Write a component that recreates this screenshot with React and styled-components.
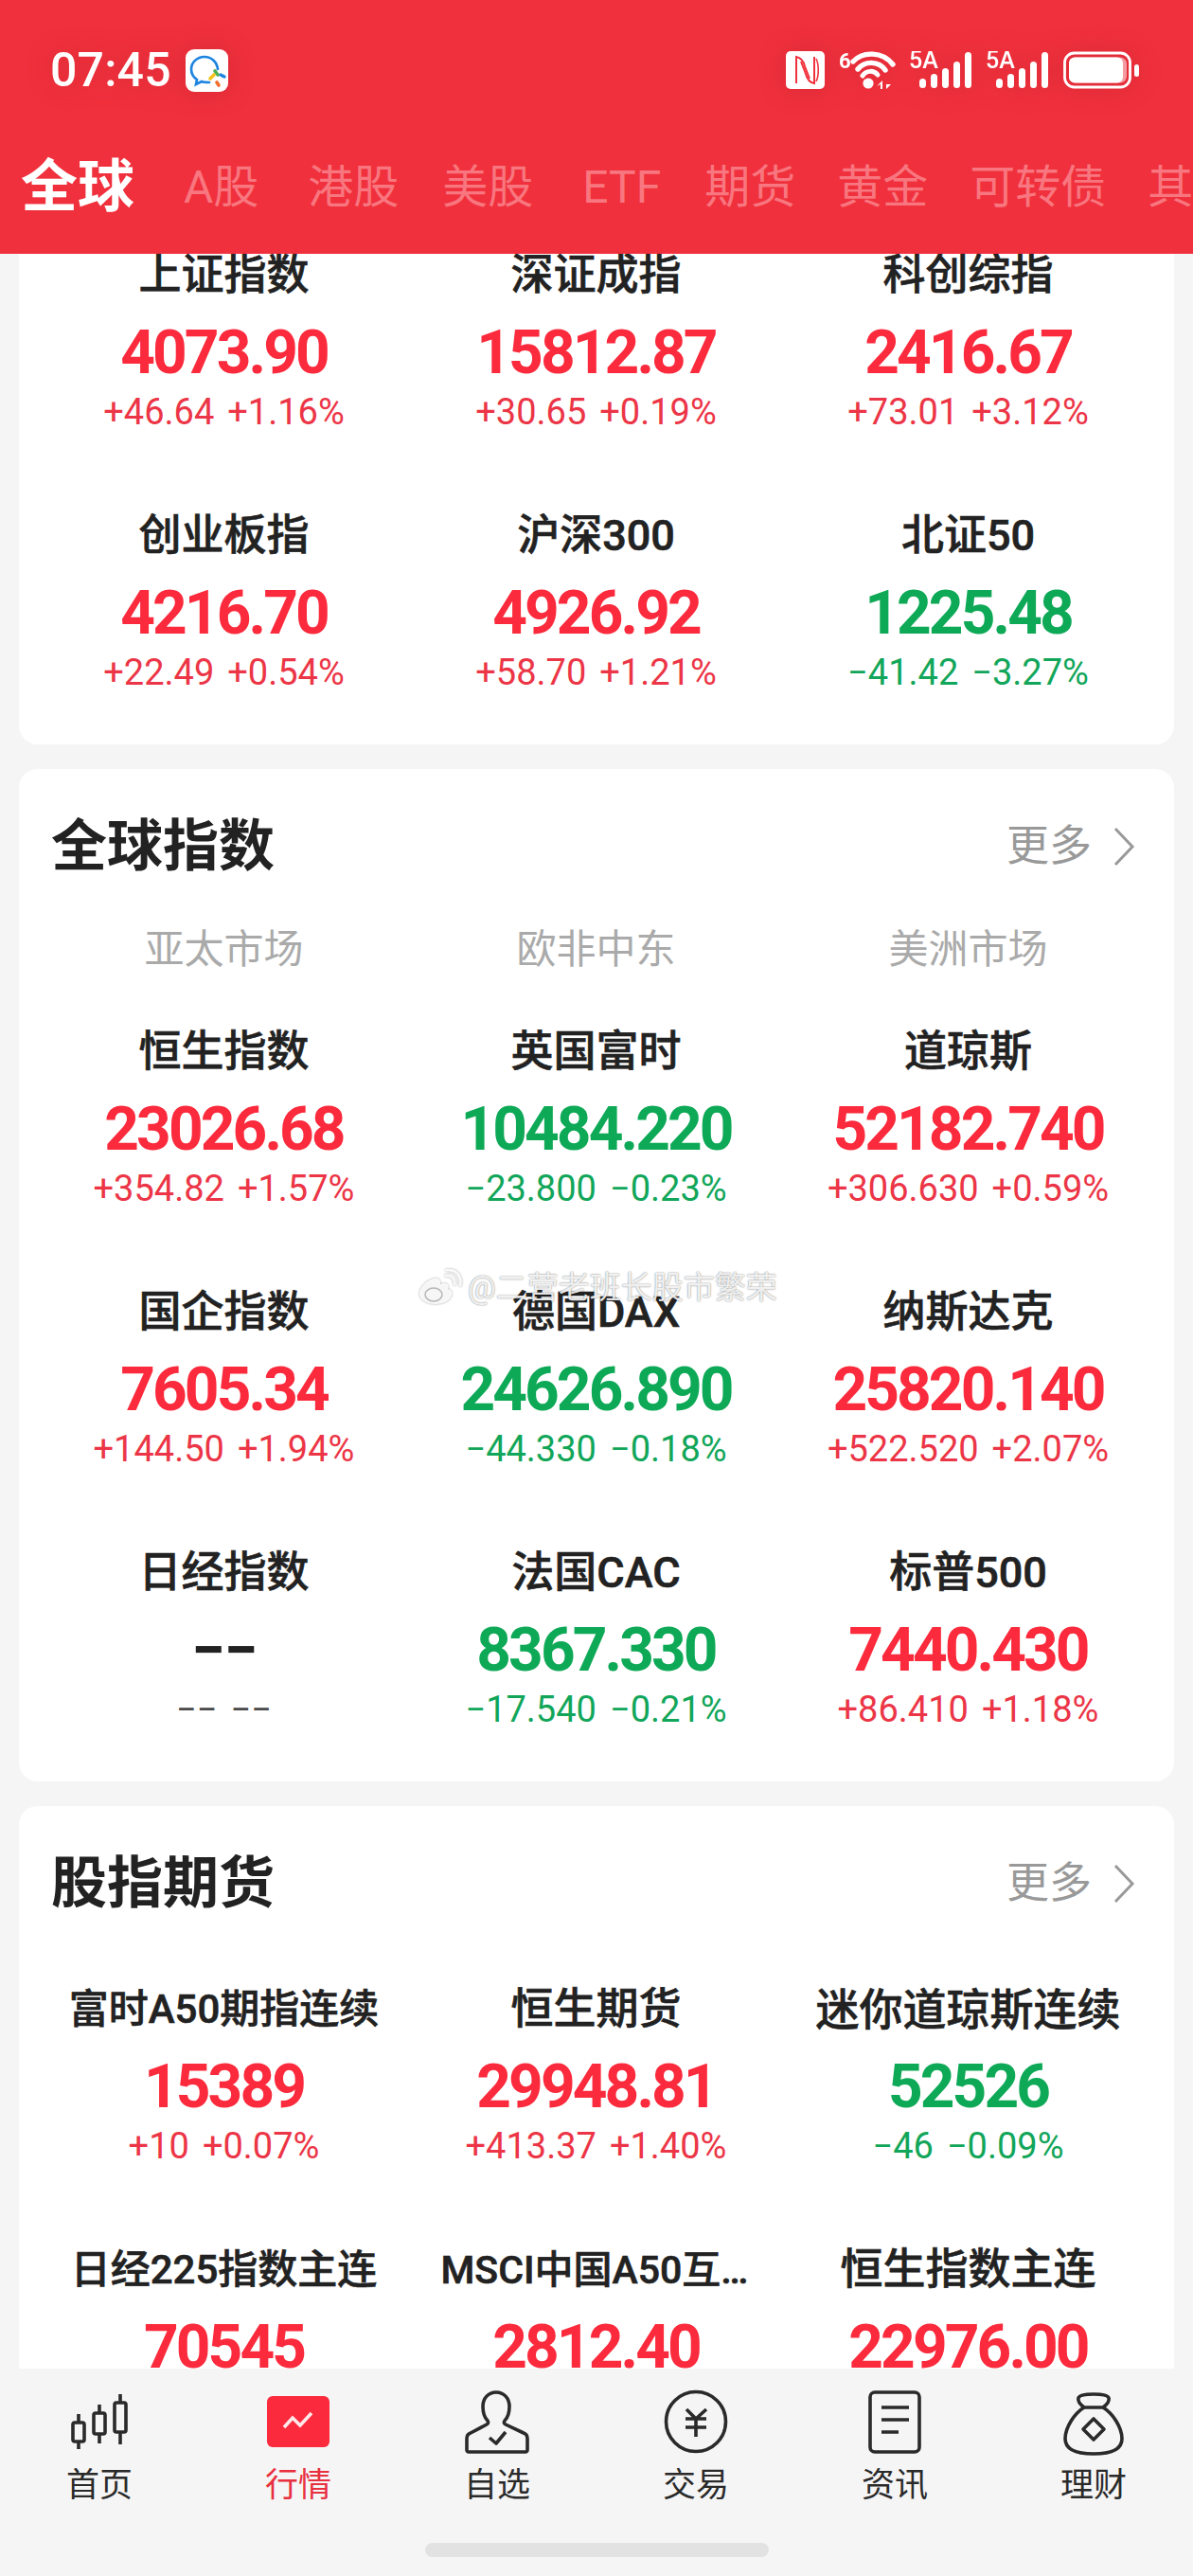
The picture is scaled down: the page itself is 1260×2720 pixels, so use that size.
import React from 'react';
import styled, { createGlobalStyle } from 'styled-components';

const Global = createGlobalStyle`
  html, body { margin: 0; padding: 0; background: #f5f5f5; }
  * { box-sizing: border-box; }
`;
const SANS = `Roboto, "Noto Sans CJK SC", sans-serif`;
const toneColor = { up: '#fb2a3c', down: '#0ea957', flat: '#222222' };
const subColor = { up: '#ec3546', down: '#12a65a', flat: '#4a4a4a' };

const Screen = styled.div`
  position: relative; width: 1260px; height: 2720px; overflow: hidden;
  display: flex; flex-direction: column; background: #f5f5f5; font-family: ${SANS};
`;
const Header = styled.header`
  flex: none; height: 268px; background: #f0303c; display: flex; flex-direction: column; overflow: hidden;
`;
const StatusBar = styled.div`
  height: 150px; padding: 51px 57px 0 53px; display: flex; justify-content: space-between; align-items: flex-start;
`;
const StatusGroup = styled.div`
  display: flex; align-items: center; height: 46px; gap: ${p => p.$gap}px;
  filter: drop-shadow(0 0 14px rgba(120,20,30,.22));
`;
const Time = styled.span`
  color: #fff; font-size: 50px; font-weight: 500; line-height: 46px; letter-spacing: .2px;
`;
const Tabs = styled.nav`
  display: flex; align-items: center; gap: 44px; padding: 0 0 0 22px; height: 96px; white-space: nowrap;
`;
const Tab = styled.span`
  flex: none; line-height: 96px; margin-right: ${p => p.$extra}px;
  color: ${p => p.$active ? '#fff' : '#f8767f'};
  font-size: ${p => p.$active ? 60 : 48}px;
  font-weight: ${p => p.$active ? 700 : 400};
`;
const Scroller = styled.main`
  flex: 1; min-height: 0; overflow: hidden; padding: 0 20px; display: flex; flex-direction: column; gap: 26px;
`;
const Card = styled.section`
  flex: none; background: #fff; border-radius: 20px;
  padding: ${p => p.$clipped ? '0 21px 54px 20px' : '52px 21px 54px 20px'};
  margin-top: ${p => p.$clipped ? -7 : 0}px;
  ${p => p.$clipped ? 'border-top-left-radius:0;border-top-right-radius:0;' : ''}
`;
const CardHead = styled.div`
  display: flex; justify-content: space-between; align-items: center; height: 60px; padding-right: 20px;
`;
const Title = styled.h2`
  margin: 0; font-size: 59px; font-weight: 700; color: #222; line-height: 60px; padding-left: 14px;
`;
const More = styled.div`
  display: flex; align-items: center; gap: 22px; color: #999; font-size: 45px; line-height: 60px;
`;
const Regions = styled.div`
  display: grid; grid-template-columns: repeat(3, 1fr); margin-top: 54px; height: 50px;
`;
const Region = styled.span`
  text-align: center; color: #aaa; font-size: 42px; line-height: 50px;
`;
const Grid = styled.div`
  display: grid; grid-template-columns: repeat(3, 1fr); row-gap: 79px; margin-top: ${p => p.$top}px;
`;
const Cell = styled.div`
  display: flex; flex-direction: column; align-items: center; min-width: 0;
`;
const Name = styled.div`
  height: 60px; line-height: 60px; font-size: ${p => p.$size}px; font-weight: 500; color: #222; white-space: nowrap;
  max-width: ${p => p.$max}px; overflow: hidden; text-overflow: ellipsis; -webkit-text-stroke: .6px #222;
`;
const Price = styled.div`
  margin-top: 17px; height: 70px; line-height: 70px; font-size: 64px; font-weight: 700;
  letter-spacing: ${p => p.$tone === 'flat' ? -1 : -2.9}px;
  color: ${p => toneColor[p.$tone]};
`;
const Change = styled.div`
  margin-top: 5px; height: 44px; line-height: 44px; font-size: 38px; display: flex; gap: 14px;
  color: ${p => subColor[p.$tone]};
`;
const Footer = styled.footer`
  flex: none; height: 219px; background: #f5f5f5; padding-top: 16px; display: flex; flex-direction: column; align-items: center;
`;
const NavRow = styled.div`
  display: grid; grid-template-columns: repeat(6, 210px); width: 1260px;
`;
const NavItem = styled.div`
  display: flex; flex-direction: column; align-items: center; gap: 6px;
  color: ${p => p.$active ? '#e8303f' : '#2a2a2a'};
`;
const NavLabel = styled.span`
  font-size: 35px; line-height: 44px;
`;
const Indicator = styled.div`
  width: 363px; height: 15px; border-radius: 8px; background: #e2e2e2; margin-top: 38px;
`;
const Watermark = styled.div`
  position: absolute; left: 442px; top: 1338px; display: flex; align-items: center; gap: 6px; white-space: nowrap;
  color: rgba(255,255,255,.88); font-size: 33px; line-height: 44px;
  text-shadow: 0 0 2px rgba(0,0,0,.38), 0 0 1px rgba(0,0,0,.25);
`;
const Chevron = styled.svg`
  display: block;
`;

const I = { width: 80, height: 80, viewBox: '0 0 80 80', fill: 'none', stroke: '#2a2a2a', strokeWidth: 3.6, strokeLinecap: 'butt', strokeLinejoin: 'round' };

const HomeIcon = () => (
  <svg {...I}>
    <path d="M18 32V41M18 61V69M40 22V31M40 53V63M62 11V20M62 51V64" />
    <rect x="12" y="41" width="12" height="20" rx="2" />
    <rect x="34" y="31" width="12" height="22" rx="2" />
    <rect x="56" y="20" width="12" height="31" rx="2" />
  </svg>
);
const MarketIcon = () => (
  <svg width="80" height="80" viewBox="0 0 80 80" fill="none">
    <rect x="7" y="13" width="66" height="54" rx="6" fill="#fb2a3c" />
    <path d="M25 46L34 36L42 44L54 31" stroke="#ffe9ea" strokeWidth="3.6" />
  </svg>
);
const WatchIcon = () => (
  <svg {...I}>
    <path d="M30 39C26 35 25 30 25 24C25 15 31 9 39 9C47 9 53 15 53 24C53 30 52 35 48 39C47 41 47 42 49 43L68 52C71 53 72 55 72 58V70C72 71 71 72 70 72H10C9 72 8 71 8 70V58C8 55 9 53 12 52L29 43C31 42 31 41 30 39Z" />
    <path d="M32 57L39 63L49 51" />
  </svg>
);
const TradeIcon = () => (
  <svg {...I}>
    <ellipse cx="40" cy="40" rx="31.5" ry="31.5" />
    <path d="M30 27L40 37L51 27M40 37V56M29 37H51M29 46H51" />
  </svg>
);
const NewsIcon = () => (
  <svg {...I}>
    <rect x="14" y="9" width="52" height="63" rx="5" />
    <path d="M26 25H55M26 38H55M26 51H44" />
  </svg>
);
const BagIcon = () => (
  <svg {...I}>
    <path d="M30 25C26 22 23 19 24 15C25 12 32 11 40 11C48 11 55 12 56 15C57 19 54 22 50 25Z" />
    <path d="M30 25C20 31 10 46 10 58C10 70 22 74 40 74C58 74 70 70 70 58C70 46 60 31 50 25" />
    <path d="M40 37L51 48L40 59L29 48Z" />
  </svg>
);
const AppTile = () => (
  <svg width="45" height="45" viewBox="0 0 45 45" fill="none" style={{ marginLeft: 15 }}>
    <rect width="45" height="45" rx="9" fill="#fff" />
    <path d="M34 21C33 13 27 8 20 8C12 8 6 14 6 21C6 26 9 30 12 32L11 37L17 34C19 35 22 35 25 35" stroke="#1d85e0" strokeWidth="2.7" strokeLinecap="round" />
    <path d="M31 23L34 27" stroke="#4caf50" strokeWidth="3.6" strokeLinecap="round" />
    <path d="M37 27L41 29" stroke="#1d85e0" strokeWidth="3.4" strokeLinecap="round" />
    <path d="M33 35L35 38" stroke="#f0702a" strokeWidth="3.6" strokeLinecap="round" />
    <path d="M26 31L30 27" stroke="#f5c21b" strokeWidth="3.6" strokeLinecap="round" />
  </svg>
);
const NfcIcon = () => (
  <svg width="41" height="40" viewBox="0 0 41 40" fill="none">
    <rect width="41" height="40" rx="5" fill="#fff" />
    <path d="M11 34V6C17 7 19 12 20 16L25 29" stroke="#f0303c" strokeWidth="2" />
    <path d="M30 6V34C24 33 22 28 21 24L16 11" stroke="#f0303c" strokeWidth="2" />
    <path d="M32 8C35 14 35 26 32 32" stroke="#f0303c" strokeWidth="1.6" />
  </svg>
);
const WifiIcon = () => (
  <svg width="60" height="42" viewBox="0 0 60 42" fill="#fff">
    <text x="0" y="19" fontFamily="Roboto, sans-serif" fontWeight="700" fontSize="22" fill="#fff">6</text>
    <path d="M15 12C25 1 46 1 57 15" stroke="#fff" strokeWidth="5.4" fill="none" strokeLinecap="round" />
    <path d="M20 20C27 11 42 11 49 21" stroke="#fff" strokeWidth="5.4" fill="none" strokeLinecap="round" />
    <path d="M25 27C29 21 37 21 41 26" stroke="#fff" strokeWidth="5" fill="none" strokeLinecap="round" />
    <circle cx="31" cy="35" r="5.6" />
    <path d="M46 32V41H44V36L40 38ZM50 32V41L55 36H50Z" />
  </svg>
);
const SignalIcon = () => (
  <svg width="66" height="40" viewBox="0 0 66 40" fill="#fff">
    <text x="-1" y="18" fontFamily="Roboto, sans-serif" fontWeight="500" fontSize="25" fill="#fff">5A</text>
    <rect x="10" y="29" width="7" height="10" rx="3.5" />
    <rect x="22" y="24" width="7" height="15" rx="3.5" />
    <rect x="34" y="18" width="7" height="21" rx="3.5" />
    <rect x="46" y="11" width="7" height="28" rx="3.5" />
    <rect x="58" y="1" width="7" height="38" rx="3.5" />
  </svg>
);
const BatteryIcon = () => (
  <svg width="80" height="40" viewBox="0 0 80 40">
    <rect x="1.5" y="2" width="69" height="36" rx="10" fill="none" stroke="#fff" strokeWidth="2.8" />
    <rect x="6" y="6.5" width="61" height="27" rx="7" fill="#f59aa0" />
    <rect x="6" y="6.5" width="57" height="27" rx="6" fill="#fff" />
    <rect x="75" y="14" width="5" height="13" rx="2.5" fill="#fff" />
  </svg>
);
const WeiboIcon = () => (
  <svg width="46" height="40" viewBox="0 0 46 40" fill="none" style={{ filter: 'drop-shadow(0 0 1px rgba(0,0,0,.4))' }}>
    <path d="M18 37C8 37 1 32 1 26C1 18 13 8 20 10C24 11 23 15 23 16C30 13 33 17 31 21C35 22 36 25 35 28C33 33 27 37 18 37Z" fill="rgba(255,255,255,.9)" />
    <ellipse cx="16" cy="27" rx="9" ry="7" fill="none" stroke="rgba(120,120,120,.5)" strokeWidth="1.5" />
    <path d="M29 7C35 6 39 10 38 16M30 1C39 0 46 7 44 17" stroke="rgba(255,255,255,.9)" strokeWidth="3" strokeLinecap="round" />
  </svg>
);
const MoreChevron = () => (
  <Chevron width="24" height="44" viewBox="0 0 24 44" fill="none">
    <path d="M3 3L21 22L3 41" stroke="#999" strokeWidth="3" />
  </Chevron>
);

const tabs = [['全球', 8], ['A股', 8], ['港股', 2], ['美股', 8], ['ETF', 2], ['期货', 0], ['黄金', 0], ['可转债', 0], ['其他', 0]];
const domestic = [
  ['上证指数', '4073.90', '+46.64', '+1.16%', 'up'],
  ['深证成指', '15812.87', '+30.65', '+0.19%', 'up'],
  ['科创综指', '2416.67', '+73.01', '+3.12%', 'up'],
  ['创业板指', '4216.70', '+22.49', '+0.54%', 'up'],
  ['沪深300', '4926.92', '+58.70', '+1.21%', 'up'],
  ['北证50', '1225.48', '−41.42', '−3.27%', 'down'],
];
const global = [
  ['恒生指数', '23026.68', '+354.82', '+1.57%', 'up'],
  ['英国富时', '10484.220', '−23.800', '−0.23%', 'down'],
  ['道琼斯', '52182.740', '+306.630', '+0.59%', 'up'],
  ['国企指数', '7605.34', '+144.50', '+1.94%', 'up'],
  ['德国DAX', '24626.890', '−44.330', '−0.18%', 'down'],
  ['纳斯达克', '25820.140', '+522.520', '+2.07%', 'up'],
  ['日经指数', '−−', '−−', '−−', 'flat'],
  ['法国CAC', '8367.330', '−17.540', '−0.21%', 'down'],
  ['标普500', '7440.430', '+86.410', '+1.18%', 'up'],
];
const futures = [
  ['富时A50期指连续', '15389', '+10', '+0.07%', 'up', 42],
  ['恒生期货', '29948.81', '+413.37', '+1.40%', 'up'],
  ['迷你道琼斯连续', '52526', '−46', '−0.09%', 'down', 46],
  ['日经225指数主连', '70545', '', '', 'up', 42],
  ['MSCI中国A50互联网', '2812.40', '', '', 'up', 41, 328],
  ['恒生指数主连', '22976.00', '', '', 'up'],
];
const nav = [
  ['首页', HomeIcon], ['行情', MarketIcon], ['自选', WatchIcon],
  ['交易', TradeIcon], ['资讯', NewsIcon], ['理财', BagIcon],
];

const Quotes = ({ rows, top }) => (
  <Grid $top={top}>
    {rows.map(([name, price, delta, pct, tone, size, max]) => (
      <Cell key={name}>
        <Name $size={size || 45} $max={max || 360}>{name}</Name>
        <Price $tone={tone}>{price}</Price>
        <Change $tone={tone}><span>{delta}</span><span>{pct}</span></Change>
      </Cell>
    ))}
  </Grid>
);

const Head = ({ title }) => (
  <CardHead>
    <Title>{title}</Title>
    <More>更多<MoreChevron /></More>
  </CardHead>
);

export default function App() {
  return (
    <Screen>
      <Global />
      <Header>
        <StatusBar>
          <StatusGroup $gap={0}>
            <Time>07:45</Time>
            <AppTile />
          </StatusGroup>
          <StatusGroup $gap={15}>
            <NfcIcon />
            <WifiIcon />
            <SignalIcon />
            <SignalIcon />
            <BatteryIcon />
          </StatusGroup>
        </StatusBar>
        <Tabs>
          {tabs.map(([t, extra], i) => <Tab key={t} $active={i === 0} $extra={extra}>{t}</Tab>)}
        </Tabs>
      </Header>
      <Scroller>
        <Card $clipped>
          <Quotes rows={domestic} top={0} />
        </Card>
        <Card>
          <Head title="全球指数" />
          <Regions>
            <Region>亚太市场</Region>
            <Region>欧非中东</Region>
            <Region>美洲市场</Region>
          </Regions>
          <Quotes rows={global} top={53} />
        </Card>
        <Card>
          <Head title="股指期货" />
          <Quotes rows={futures} top={73} />
        </Card>
      </Scroller>
      <Footer>
        <NavRow>
          {nav.map(([label, Icon], i) => (
            <NavItem key={label} $active={i === 1}>
              <Icon />
              <NavLabel>{label}</NavLabel>
            </NavItem>
          ))}
        </NavRow>
        <Indicator />
      </Footer>
      <Watermark>
        <WeiboIcon />
        <span>@二营老班长股市繁荣</span>
      </Watermark>
    </Screen>
  );
}
